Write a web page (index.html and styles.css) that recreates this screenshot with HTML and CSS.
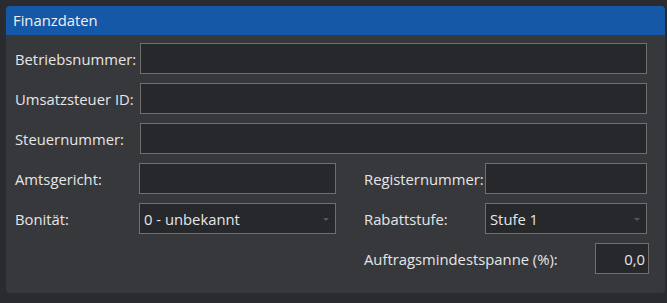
FILE: index.html
```html
<!DOCTYPE html>
<html>
	<head>
		<meta charset="UTF-8">
		<title>Finanzdaten</title>
		<link rel="stylesheet" href="styles.css">
	</head>
	<body>
		<div class="panel">
			<div class="head">Finanzdaten</div>
			<div class="form">
				<label class="lbl">Betriebsnummer:</label>
				<div class="field wide"></div>
				<label class="lbl">Umsatzsteuer ID:</label>
				<div class="field wide"></div>
				<label class="lbl">Steuernummer:</label>
				<div class="field wide"></div>

				<label class="lbl">Amtsgericht:</label>
				<div class="field"></div>
				<span></span>
				<label class="lbl">Registernummer:</label>
				<div class="field"></div>

				<label class="lbl">Bonität:</label>
				<div class="field combo">0 - unbekannt<i class="arrow"></i></div>
				<span></span>
				<label class="lbl">Rabattstufe:</label>
				<div class="field combo">Stufe 1<i class="arrow"></i></div>

				<div class="last">
					<label class="lbl">Auftragsmindestspanne (%):</label>
					<div class="field num">0,0</div>
				</div>
			</div>
		</div>
	</body>
</html>
```
FILE: styles.css
```css
body {
	margin: 0;
	background: #2a2b2f;
	font-family: "Open Sans", "Noto Sans", sans-serif;
	font-size: 14.8px;
	color: #e6e6e6;
}

.panel {
	margin: 6px 0 0 6px;
	width: 659px;
	height: 287px;
	background: #37383c;
	border-radius: 4px;
	overflow: hidden;
}

.head {
	height: 29px;
	line-height: 29px;
	padding-left: 7px;
	background: #1558a8;
	color: #f0f0f0;
	font-size: 14.8px;
}

.form {
	display: grid;
	grid-template-columns: 124px 197px 28px 121px 162px;
	grid-auto-rows: 31px;
	row-gap: 9px;
	padding: 8px 0 0 9px;
}

.lbl {
	display: flex;
	align-items: center;
	white-space: nowrap;
}

.field {
	background: #27282c;
	border: 1px solid #6f6f6f;
	box-sizing: border-box;
}

.wide {
	grid-column: 2 / 6;
	margin-left: 1px;
}

.combo {
	position: relative;
	display: flex;
	align-items: center;
	padding-left: 4px;
}

.arrow {
	position: absolute;
	right: 6px;
	top: 14px;
	border-left: 3px solid transparent;
	border-right: 3px solid transparent;
	border-top: 3px solid #56575c;
}

.last {
	grid-column: 4 / 6;
	display: flex;
	justify-content: space-between;
}

.num {
	width: 54px;
	margin-right: -2px;
	display: flex;
	align-items: center;
	justify-content: flex-end;
	padding-right: 3px;
}
```
